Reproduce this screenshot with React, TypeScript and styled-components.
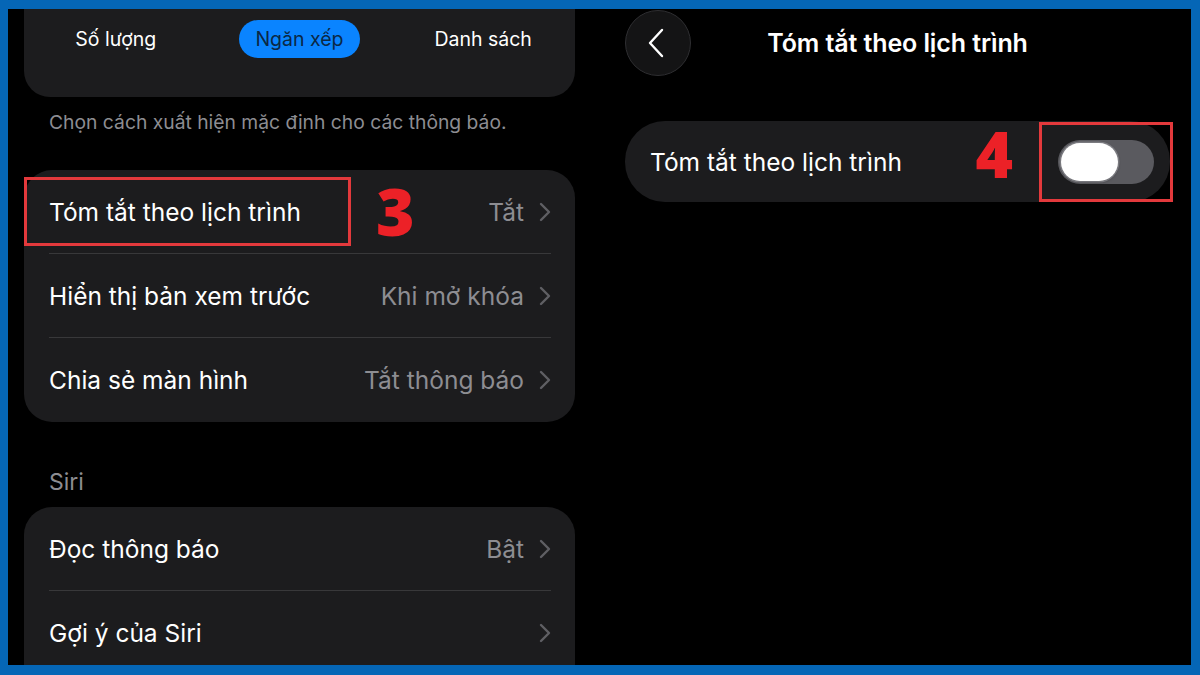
import React from "react";
import styled, {createGlobalStyle} from "styled-components";

const GlobalStyle = createGlobalStyle`
    html, body {
        margin: 0;
        padding: 0;
        background: #000;
    }
    * {
        box-sizing: border-box;
    }
`;

const FONT = `Inter, "Noto Sans", "Liberation Sans", sans-serif`;

const Frame = styled.div`
    width: 1200px;
    height: 675px;
    border-style: solid;
    border-color: #0566b6;
    border-width: 9px 9px 10px 8px;
    background: #000;
    overflow: hidden;
    display: flex;
    font-family: ${FONT};
    color: #fff;
`;

const LeftPane = styled.div`
    width: 592px;
    flex-shrink: 0;
    padding: 0 25px 0 16px;
    display: flex;
    flex-direction: column;

    & > * {
        flex-shrink: 0;
    }
`;

const RightPane = styled.div`
    flex: 1;
    padding: 1px 21px 0 25px;
    display: flex;
    flex-direction: column;

    & > * {
        flex-shrink: 0;
    }
`;

const SegmentCard = styled.div`
    height: 88px;
    background: #1c1c1e;
    border-radius: 0 0 26px 26px;
    display: grid;
    grid-template-columns: repeat(3, 1fr);
    align-items: start;
    justify-items: center;
    padding-top: 11px;
`;

const Segment = styled.div<{ $active?: boolean }>`
    height: 38px;
    padding: 0 16px;
    border-radius: 19px;
    display: flex;
    align-items: center;
    font-size: 19.5px;
    background: ${p => p.$active ? "#0a84ff" : "transparent"};
    color: ${p => p.$active ? "#0b2845" : "#fff"};
`;

const Caption = styled.div`
    margin: 13px 0 0 25px;
    font-size: 19.3px;
    line-height: 24px;
    color: #8d8d92;
`;

const SectionTitle = styled.div`
    margin: 46px 0 0 25px;
    font-size: 23px;
    line-height: 28px;
    color: #8d8d92;
`;

const Group = styled.div<{ $gap: number; $open?: boolean }>`
    margin-top: ${p => p.$gap}px;
    background: #1c1c1e;
    border-radius: ${p => p.$open ? "28px 28px 0 0" : "28px"};
`;

const Row = styled.div<{ $last?: boolean }>`
    height: 84px;
    margin: 0 24px 0 25px;
    display: flex;
    align-items: center;
    border-bottom: ${p => p.$last ? "none" : "1px solid #38383a"};
`;

const Label = styled.span`
    font-size: 24.5px;
    color: #fff;
    white-space: nowrap;
`;

const Value = styled.span`
    margin-left: auto;
    font-size: 24.5px;
    color: #8d8d92;
    white-space: nowrap;
`;

const Highlight = styled.div`
    border: 3px solid #e3393c;
    display: flex;
    align-items: center;
`;

const LabelHighlight = styled(Highlight)`
    margin-left: -25px;
    width: 327px;
    height: 69px;
    padding-left: 22px;
`;

const StepNumber = styled.span<{ $size: number; $lift?: number }>`
    font-family: "Open Sans", Inter, sans-serif;
    font-weight: 800;
    font-size: ${p => p.$size}px;
    line-height: 1;
    color: #ec2127;
    position: relative;
    top: ${p => -(p.$lift ?? 0)}px;
`;

const Chevron = ({color = "#5f5f64", size = 20}: { color?: string, size?: number }) => (
    <svg width={size * 0.6} height={size} viewBox="0 0 12 20" style={{marginLeft: 15, flexShrink: 0}}>
        <path d="M2 2 L10 10 L2 18" fill="none" stroke={color} strokeWidth="2.4" strokeLinecap="round"
              strokeLinejoin="round"/>
    </svg>
);

const Header = styled.div`
    display: grid;
    grid-template-columns: 66px 1fr 66px;
    align-items: center;
    height: 66px;
`;

const BackButton = styled.div`
    width: 66px;
    height: 66px;
    border-radius: 50%;
    background: #141415;
    border: 1px solid #2e2e31;
    display: flex;
    align-items: center;
    justify-content: center;
    padding-right: 4px;
`;

const Title = styled.div`
    text-align: center;
    font-size: 25px;
    font-weight: 600;
    letter-spacing: -0.1px;
`;

const ToggleCard = styled.div`
    margin-top: 45px;
    height: 81px;
    background: #1c1c1e;
    border-radius: 40px;
    display: flex;
    align-items: center;
    padding-left: 25px;
`;

const ToggleHighlight = styled(Highlight)`
    width: 134px;
    height: 80px;
    margin: 0 -3px 0 26px;
    justify-content: center;
`;

const Track = styled.div`
    width: 96px;
    height: 44px;
    border-radius: 22px;
    background: #5a5a5f;
    padding: 3px;
    display: flex;
`;

const Knob = styled.div`
    width: 57px;
    height: 38px;
    border-radius: 19px;
    background: #fff;
    box-shadow: 0 0 0 1.5px rgba(140, 140, 145, 0.7), 0 1px 3px rgba(0, 0, 0, 0.4);
`;

const App = () => {
    return (
        <>
            <GlobalStyle/>
            <Frame>
                <LeftPane>
                    <SegmentCard>
                        <Segment>Số lượng</Segment>
                        <Segment $active>Ngăn xếp</Segment>
                        <Segment>Danh sách</Segment>
                    </SegmentCard>
                    <Caption>Chọn cách xuất hiện mặc định cho các thông báo.</Caption>

                    <Group $gap={36}>
                        <Row>
                            <LabelHighlight><Label>Tóm tắt theo lịch trình</Label></LabelHighlight>
                            <StepNumber $size={66} $lift={2} style={{marginLeft: 25}}>3</StepNumber>
                            <Value>Tắt</Value>
                            <Chevron/>
                        </Row>
                        <Row>
                            <Label>Hiển thị bản xem trước</Label>
                            <Value>Khi mở khóa</Value>
                            <Chevron/>
                        </Row>
                        <Row $last>
                            <Label>Chia sẻ màn hình</Label>
                            <Value>Tắt thông báo</Value>
                            <Chevron/>
                        </Row>
                    </Group>

                    <SectionTitle>Siri</SectionTitle>
                    <Group $gap={11} $open>
                        <Row>
                            <Label>Đọc thông báo</Label>
                            <Value>Bật</Value>
                            <Chevron/>
                        </Row>
                        <Row $last>
                            <Label>Gợi ý của Siri</Label>
                            <Value/>
                            <Chevron/>
                        </Row>
                    </Group>
                </LeftPane>

                <RightPane>
                    <Header>
                        <BackButton>
                            <svg width="16" height="30" viewBox="0 0 16 30">
                                <path d="M14 2 L2 15 L14 28" fill="none" stroke="#fff" strokeWidth="2.4"
                                      strokeLinecap="round" strokeLinejoin="round"/>
                            </svg>
                        </BackButton>
                        <Title>Tóm tắt theo lịch trình</Title>
                        <span/>
                    </Header>
                    <ToggleCard>
                        <Label>Tóm tắt theo lịch trình</Label>
                        <StepNumber $size={64} $lift={8} style={{marginLeft: "auto"}}>4</StepNumber>
                        <ToggleHighlight>
                            <Track><Knob/></Track>
                        </ToggleHighlight>
                    </ToggleCard>
                </RightPane>
            </Frame>
        </>
    );
};

export default App;
